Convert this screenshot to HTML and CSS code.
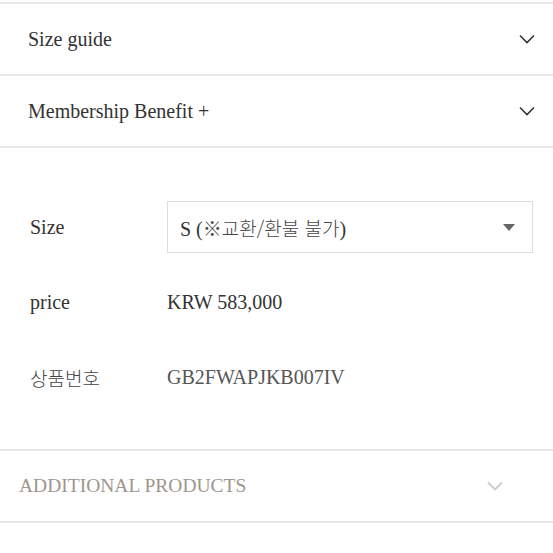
FILE: index.html
```html
<!DOCTYPE html>
<html lang="ko">

<head>
  <meta charset="UTF-8">
  <title>Product Detail</title>
  <link rel="stylesheet" href="styles.css">
</head>

<body>
  <div class="detail">
    <div class="fold-row">
      <span class="fold-title">Size guide</span>
      <svg class="chevron" width="16" height="10" viewBox="0 0 16 10"><path d="M1 1.5 L8 8.5 L15 1.5" fill="none" stroke="#333" stroke-width="1.6"/></svg>
    </div>
    <div class="fold-row">
      <span class="fold-title">Membership Benefit +</span>
      <svg class="chevron" width="16" height="10" viewBox="0 0 16 10"><path d="M1 1.5 L8 8.5 L15 1.5" fill="none" stroke="#333" stroke-width="1.6"/></svg>
    </div>

    <div class="options">
      <div class="opt-label">Size</div>
      <div class="opt-value">
        <div class="select-box">
          <span>S (<span class="ko">※교환/환불 불가</span>)</span>
          <span class="caret"></span>
        </div>
      </div>

      <div class="opt-label">price</div>
      <div class="opt-value">KRW 583,000</div>

      <div class="opt-label ko">상품번호</div>
      <div class="opt-value code">GB2FWAPJKB007IV</div>
    </div>

    <div class="fold-row additional">
      <span class="fold-title">ADDITIONAL PRODUCTS</span>
      <svg class="chevron" width="16" height="10" viewBox="0 0 16 10"><path d="M1 1.5 L8 8.5 L15 1.5" fill="none" stroke="#cbcbcb" stroke-width="1.9"/></svg>
    </div>
  </div>
</body>

</html>
```

FILE: styles.css
```css
body {
  margin: 0;
  background-color: #fff;
  color: #333;
  font-family: "Liberation Serif", "Noto Sans CJK KR", serif;
}

.detail {
  margin-top: 2px;
  border-top: 2px solid #e8e8e8;
}

.fold-row {
  height: 70px;
  padding: 0 18px 0 28px;
  display: flex;
  align-items: center;
  justify-content: space-between;
  border-bottom: 2px solid #e8e8e8;
}

.fold-title {
  font-size: 20px;
}

.chevron {
  display: block;
}

.options {
  display: grid;
  grid-template-columns: 137px 366px;
  grid-auto-rows: 52px;
  row-gap: 23px;
  align-items: center;
  padding: 53px 0 46px 30px;
  border-bottom: 2px solid #e8e8e8;
}

.opt-label,
.opt-value {
  font-size: 20px;
}

.ko {
  font-family: "Noto Sans CJK KR", sans-serif;
  font-weight: 300;
  font-size: 19px;
  color: #444;
}

.code {
  color: #555;
}

.select-box {
  height: 50px;
  border: 1px solid #ddd;
  display: flex;
  align-items: center;
  justify-content: space-between;
  padding: 0 17px 0 12px;
}

.caret {
  width: 0;
  height: 0;
  border-left: 6px solid transparent;
  border-right: 6px solid transparent;
  border-top: 7px solid #666;
}

.additional {
  padding: 0 50px 0 19px;
}

.additional .fold-title {
  font-size: 19.5px;
  color: #9e958c;
}
```
